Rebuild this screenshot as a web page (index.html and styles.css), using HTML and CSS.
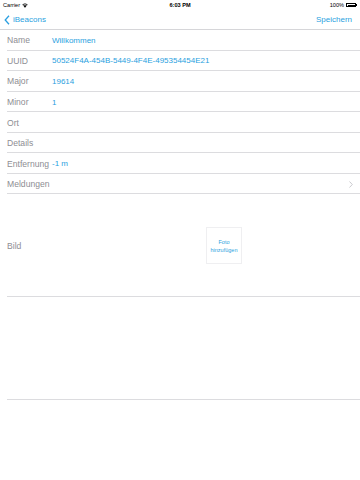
FILE: index.html
```html
<!DOCTYPE html>
<html lang="de">
<head>
    <meta charset="UTF-8">
    <meta name="viewport" content="width=device-width, initial-scale=1.0">
    <title>iBeacon bearbeiten</title>
    <link rel="stylesheet" href="styles.css">
</head>
<body>
    <div class="status-bar">
        <div class="carrier">Carrier
            <svg class="wifi" width="6" height="5" viewBox="0 0 12 9">
                <path d="M6 9 L3.6 6.3 A3.4 3.4 0 0 1 8.4 6.3 Z" fill="#000"/>
                <path d="M2.3 5 A5.3 5.3 0 0 1 9.7 5 L8.9 5.9 A4.1 4.1 0 0 0 3.1 5.9 Z" fill="#000"/>
                <path d="M0.6 3.2 A7.8 7.8 0 0 1 11.4 3.2 L10.6 4.1 A6.6 6.6 0 0 0 1.4 4.1 Z" fill="#000"/>
            </svg>
        </div>
        <div class="clock">6:03 PM</div>
        <div class="battery">100%
            <span class="battery-body"><span class="battery-level"></span></span><span class="battery-tip"></span>
        </div>
    </div>

    <div class="nav">
        <a class="nav-back">
            <svg width="6" height="10" viewBox="0 0 6 10">
                <path d="M5 0.8 L1.2 5 L5 9.2" fill="none" stroke="#2a9fe0" stroke-width="1.3"/>
            </svg>
            iBeacons
        </a>
        <a class="nav-save">Speichern</a>
    </div>

    <div class="form">
        <div class="row"><span class="label">Name</span><span class="value">Willkommen</span></div>
        <div class="row"><span class="label">UUID</span><span class="value">50524F4A-454B-5449-4F4E-495354454E21</span></div>
        <div class="row"><span class="label">Major</span><span class="value">19614</span></div>
        <div class="row"><span class="label">Minor</span><span class="value">1</span></div>
        <div class="row"><span class="label">Ort</span></div>
        <div class="row"><span class="label">Details</span></div>
        <div class="row"><span class="label">Entfernung</span><span class="value">-1 m</span></div>
        <div class="row row-link">
            <span class="label">Meldungen</span>
            <svg class="chevron" width="4" height="7" viewBox="0 0 4 7">
                <path d="M0.5 0.5 L3.3 3.5 L0.5 6.5" fill="none" stroke="#c4c4c9" stroke-width="0.9"/>
            </svg>
        </div>
        <div class="row row-image">
            <span class="label">Bild</span>
            <div class="photo-btn">Foto<br>hinzufügen</div>
        </div>
        <div class="row row-empty"></div>
    </div>
</body>
</html>
```

FILE: styles.css
```css
:root {
    --blue: #2a9fe0;
    --label: #8e8e93;
    --line: #dcdcdf;
}

body {
    font-family: 'Liberation Sans', Arial, sans-serif;
    background: white;
    color: #000;
    margin: 0;
    padding: 0;
    width: 360px;
    height: 480px;
    overflow: hidden;
}

.status-bar {
    height: 9.5px;
    display: flex;
    align-items: center;
    justify-content: space-between;
    padding: 1px 3px 0;
    box-sizing: border-box;
    font-size: 5.6px;
    position: relative;
}
.carrier {
    display: flex;
    align-items: center;
    gap: 2px;
}
.clock {
    font-weight: bold;
    position: absolute;
    left: 0;
    right: 0;
    text-align: center;
}
.battery {
    display: flex;
    align-items: center;
    gap: 2px;
}
.battery-body {
    display: inline-block;
    width: 10px;
    height: 4px;
    border: 0.5px solid #000;
    padding: 0.5px;
    box-sizing: border-box;
}
.battery-level {
    display: block;
    width: 100%;
    height: 100%;
    background: #000;
}
.battery-tip {
    display: inline-block;
    width: 1px;
    height: 2px;
    background: #000;
    margin-left: -2px;
}

.nav {
    height: 20.6px;
    display: flex;
    align-items: center;
    justify-content: space-between;
    padding: 1px 8px 0 4px;
    border-bottom: 1px solid #d6d6d9;
    box-sizing: border-box;
    font-size: 8px;
    color: var(--blue);
}
.nav-back {
    display: flex;
    align-items: center;
    gap: 3px;
}

.form {
    display: flex;
    flex-direction: column;
}
.row {
    height: 20.55px;
    margin-left: 7px;
    display: flex;
    align-items: center;
    padding-top: 1px;
    border-bottom: 1px solid var(--line);
    box-sizing: border-box;
    font-size: 8px;
}
.label {
    width: 45px;
    color: var(--label);
    font-size: 8.6px;
    white-space: nowrap;
    flex-shrink: 0;
}
.value {
    color: var(--blue);
}
.row-link {
    justify-content: space-between;
    padding-right: 7px;
}
.row-image {
    height: 103px;
}
.row-empty {
    height: 103px;
}
.photo-btn {
    width: 36px;
    height: 37px;
    margin-left: 154px;
    border: 1px solid #efeff1;
    box-sizing: border-box;
    display: flex;
    align-items: center;
    justify-content: center;
    text-align: center;
    font-size: 5.5px;
    line-height: 8px;
    color: var(--blue);
}
```
